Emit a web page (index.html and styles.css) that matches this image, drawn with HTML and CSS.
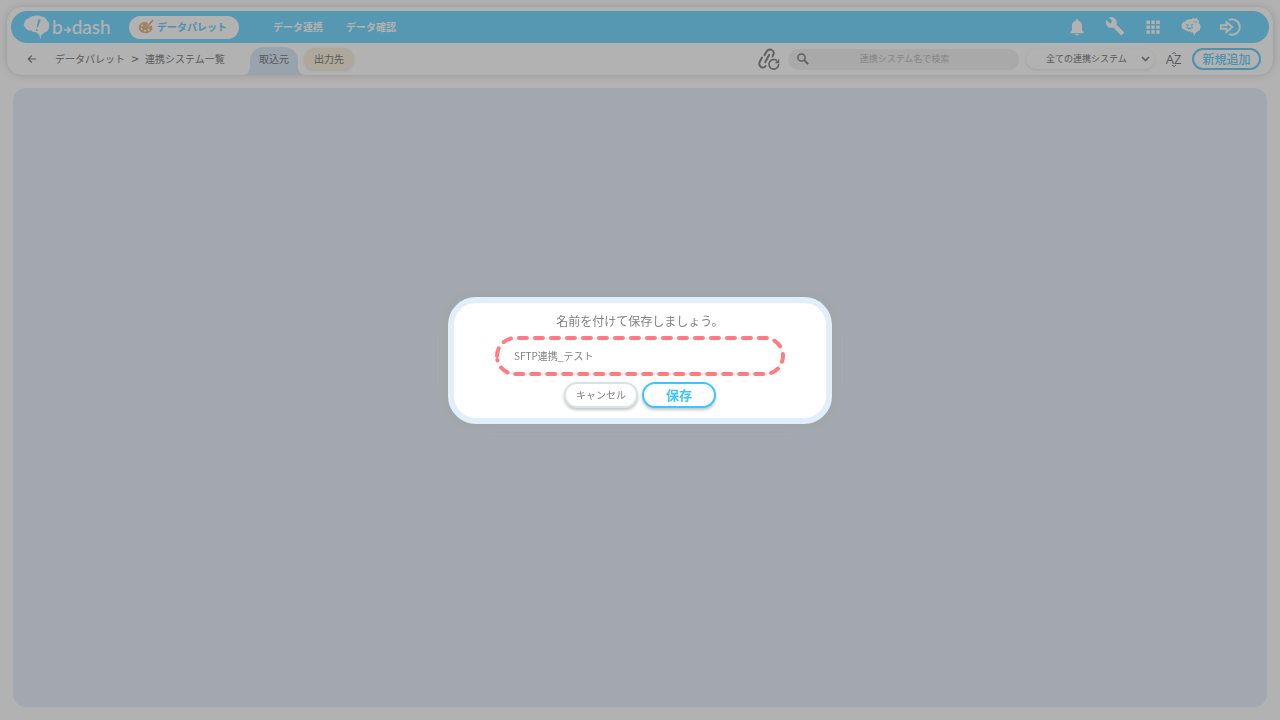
FILE: index.html
```html
<!DOCTYPE html>
<html lang="ja">
<head>
<meta charset="utf-8">
<meta name="viewport" content="width=device-width, initial-scale=1">
<title>b→dash</title>
<link rel="stylesheet" href="styles.css">
</head>
<body>
<div class="page">
  <header class="header">
    <nav class="navbar">
      <a class="logo" href="#" aria-label="b→dash">
        <svg class="logo-mark" width="28" height="24" viewBox="0 0 28 24" aria-hidden="true">
          <path fill="#fff" d="M9 1.500C12 0 16 0 18.500 1.500c3 .2 4.800 1.800 5.200 4C26 6.500 27 9 26 11.500c.2 3-1.500 5.200-4 5.500-1.200 1.800-3 2.200-3.600 3L17.500 24l-1.500-4.500c-1.300-.4-2.300-1.200-2.800-2.500-2 .3-3.800-.3-4.700-1.500-3 .2-5.200-1-6-2.800C.5 11.500.2 9 1.600 7.500 2 5 3.600 3.600 5.800 3.500 6.500 2.500 7.500 1.800 9 1.500z"/>
          <path fill="#7bdaff" d="M15.300 4.200l2.700.5-3.400 8-1.100-.2zM13.200 14l1.400.3-.5 1.700-1.400-.4z"/>
        </svg>
        <span class="logo-text">b</span>
        <svg class="logo-arrow" width="9" height="10" viewBox="0 0 9 10" aria-hidden="true"><path d="M1 5h6M4.500 2.200L7.300 5 4.500 7.800" fill="none" stroke="#fff" stroke-width="1.700"/></svg>
        <span class="logo-text">dash</span>
      </a>
      <a class="product" href="#">
        <svg width="16" height="16" viewBox="0 0 16 16" aria-hidden="true">
          <path fill="#eab88b" d="M7 3C3 3 .8 5.500.8 8.600c0 3.600 3 5.600 6.600 5.600 4 0 7-2.400 7-5.500 0-1.800-1.200-2.200-2.500-1.700-1.800.7-2.800-.2-2.200-1.500C10.500 4 9 3 7 3z"/>
          <circle cx="4" cy="6.500" r="1" fill="#fff"/><circle cx="3.700" cy="9.800" r="1" fill="#fff"/><circle cx="7" cy="11.800" r="1" fill="#fff"/><circle cx="10.700" cy="10.800" r="1" fill="#fff"/>
          <path d="M14.500 1.500L8 9.500" stroke="#fff" stroke-width="2.400"/>
          <path d="M14.500 1.500L9 8.300" stroke="#e3ab7c" stroke-width="1.400" stroke-linecap="round"/>
          <path fill="#e3ab7c" d="M8.500 7.500l1.200 1.200c-.5 1.400-1.700 1.700-3.200 1.300.8-.7.700-2 2-2.500z"/>
        </svg>
        <span>データパレット</span>
      </a>
      <a class="nav-link" href="#">データ連携</a>
      <a class="nav-link" href="#">データ確認</a>
      <div class="nav-icons">
        <button type="button" aria-label="通知"><svg width="20" height="20" viewBox="0 0 20 20"><path fill="#fff" d="M10 2c-.8 0-1.300.6-1.300 1.300v.5C6.300 4.400 5 6.300 5 8.800v4.400L3.400 15v1.200h13.200V15L15 13.200V8.800c0-2.500-1.300-4.400-3.700-5v-.5C11.300 2.600 10.800 2 10 2zM8.300 17h3.400c0 1-.7 1.600-1.700 1.600S8.300 18 8.300 17z"/></svg></button>
        <button type="button" aria-label="設定"><svg width="20" height="20" viewBox="0 1 24 24"><path fill="#fff" d="M22.700 19l-9.100-9.100c.9-2.300.4-5-1.500-6.900-2-2-5-2.400-7.400-1.300L9 6 6 9 1.600 4.700C.4 7.100.9 10.100 2.900 12.100c1.900 1.900 4.600 2.400 6.900 1.500l9.100 9.100c.4.4 1 .4 1.400 0l2.300-2.300c.5-.4.5-1.100.1-1.400z"/></svg></button>
        <button type="button" aria-label="メニュー"><svg width="20" height="20" viewBox="0 0 20 20"><path fill="#fff" d="M3.500 3.500h3.400v3.400H3.500zm4.900 0h3.400v3.400H8.400zm4.900 0h3.400v3.400h-3.400zM3.500 8.400h3.400v3.400H3.500zm4.900 0h3.400v3.400H8.400zm4.900 0h3.400v3.400h-3.400zM3.500 13.300h3.400v3.400H3.500zm4.900 0h3.400v3.400H8.400zm4.900 0h3.400v3.400h-3.400z"/></svg></button>
        <button type="button" aria-label="サポート"><svg width="20" height="20" viewBox="0 0 20 20">
          <path fill="#fff" d="M4 4.500C5.500 2.500 9 1.500 11 2.500l1-2 1.500 1.300L16 .8l.6 2.200 1.700.6-1 2c2.200 1.200 2.700 3.800 1.900 6-.4 2-1.800 3-3.600 3.400l-1.200 1.200L13.200 19l-1.200-3.500c-1.500 0-2.400-.4-3-1.300-1.700.5-3.300 0-4-1C2.500 13 .6 11.700.6 9.500.2 7 1.500 4.800 4 4.500z"/>
          <path d="M5 7.500l2.800.8M12 7.500l-2.400.8M6 9.500v2M11 9.500v2M7 12l1.500-1.200L10 12" stroke="#7bdaff" stroke-width="1.200" fill="none"/>
          <path d="M12.200 4.200c1 1.200 2.700 1.200 4 .5" stroke="#7bdaff" stroke-width=".7" fill="none"/></svg></button>
        <button type="button" aria-label="ログアウト"><svg width="22" height="20" viewBox="0 0 22 20"><g fill="none" stroke="#fff" stroke-width="1.900"><path d="M1.800 8.300h5.700V5l5.800 5-5.800 5v-3.300H1.800z"/><path d="M10 2.800c1-.4 2-.6 3-.6a7.800 7.800 0 0 1 0 15.600c-1 0-2-.2-3-.6"/></g></svg></button>
      </div>
    </nav>
    <div class="toolbar">
      <button class="back" type="button" aria-label="戻る"><svg width="10" height="10" viewBox="0 0 10 10"><path d="M9 5H1.500M4.800 1.500L1.300 5l3.500 3.500" fill="none" stroke="#888" stroke-width="1.200"/></svg></button>
      <div class="crumbs"><a href="#">データパレット</a><span class="sep">&gt;</span><span>連携システム一覧</span></div>
      <div class="tabs">
        <button class="tab tab-active" type="button">取込元</button>
        <button class="tab tab-output" type="button">出力先</button>
      </div>
      <div class="tools">
        <button class="relink" type="button" aria-label="連携を更新"><svg width="22" height="22" viewBox="0 0 22 22"><g fill="none" stroke="#888" stroke-width="1.900" stroke-linecap="round"><path d="M6.500 7.300L8.300 4C9.500 1.700 11.800 1 13.700 2c1.900 1 2.500 3.100 1.400 5.200l-.6 1.200"/><path d="M11.200 6.800L7.200 14.200"/><path d="M4 9.500L2 13.300c-1.300 2.500-.7 4.900 1.300 5.900 1.400.7 3.200.4 4.300-1.200"/></g><path d="M18.900 12.600a4.800 4.800 0 1 0 1.700 3.200" fill="none" stroke="#888" stroke-width="1.600"/><path d="M21.200 10.800v4.400h-4.400z" fill="#888"/></svg></button>
        <label class="search">
          <svg width="12" height="12" viewBox="0 0 12 12" aria-hidden="true"><circle cx="4.500" cy="4.500" r="3.600" fill="none" stroke="#888" stroke-width="1.500"/><path d="M7.200 7.200l4 4" stroke="#888" stroke-width="1.800"/></svg>
          <input type="text" placeholder="連携システム名で検索" aria-label="連携システム名で検索">
        </label>
        <div class="filter">
          <select aria-label="連携システム"><option>全ての連携システム</option></select>
          <svg class="chevron" width="9" height="6" viewBox="0 0 9 6" aria-hidden="true"><path d="M1 1l3.500 3.500L8 1" fill="none" stroke="#888" stroke-width="1.700"/></svg>
        </div>
        <button class="sort" type="button">
          <svg width="8" height="2" viewBox="0 0 8 2" aria-hidden="true"><path d="M2 2L4 .5 6 2" fill="none" stroke="#888"/></svg>
          <span>AZ</span>
          <svg width="8" height="2" viewBox="0 0 8 2" aria-hidden="true"><path d="M2 0l2 1.500L6 0" fill="none" stroke="#888"/></svg>
        </button>
        <button class="add" type="button">新規追加</button>
      </div>
    </div>
  </header>
  <main class="content"></main>
</div>

<div class="backdrop">
  <form class="dialog" role="dialog" aria-labelledby="dialog-title">
    <label class="dialog-title" id="dialog-title" for="name">名前を付けて保存しましょう。</label>
    <div class="field">
      <input id="name" type="text" value="SFTP連携_テスト">
      <svg class="highlight" width="290" height="40" viewBox="0 0 290 40" aria-hidden="true"><path d="M2 20A18 18 0 0 1 20 2H270A18 18 0 0 1 270 38H20A18 18 0 0 1 2.400 24" fill="none" stroke="#ff7c80" stroke-width="4" stroke-linecap="round" stroke-dasharray="8 8"/></svg>
    </div>
    <div class="actions">
      <button class="action cancel" type="button">キャンセル</button>
      <button class="action save" type="submit">保存</button>
    </div>
  </form>
</div>
</body>
</html>
```

FILE: styles.css
```css
* { box-sizing: border-box; }

body {
  margin: 0;
  background: #fff;
  color: #808080;
  font: 10px/16px "Noto Sans CJK JP", sans-serif;
}

button, input, select {
  margin: 0;
  padding: 0;
  border: 0;
  background: none;
  color: inherit;
  font: inherit;
  outline: 0;
}

a { color: inherit; text-decoration: none; }
svg { display: block; flex: none; }

.page {
  display: flex;
  flex-direction: column;
  gap: 13px;
  min-height: 100vh;
  padding: 7px 7px 13px;
}

.header {
  padding: 4px 4px 0;
  border-radius: 15px;
  background: #fff;
  box-shadow: 0 0 8px rgba(0, 0, 0, .16);
}

.navbar {
  display: flex;
  align-items: center;
  height: 32px;
  padding: 0 28px 0 12px;
  border-radius: 16px;
  background: #7bdaff;
  color: #fff;
}

.logo { display: flex; align-items: center; width: 106px; }
.logo-mark { margin-right: 1px; }
.logo-text { font: 500 19px/24px Lato, sans-serif; }
.logo-arrow { margin-top: 5px; }

.product {
  display: flex;
  align-items: center;
  gap: 3px;
  height: 23px;
  margin-right: 34px;
  padding: 0 12px 0 9px;
  border-radius: 12px;
  background: #fff;
  color: #6dd2fa;
  font-weight: 700;
}

.nav-link { margin-right: 23px; font-weight: 700; }

.nav-icons { display: flex; gap: 18px; margin-left: auto; }

.toolbar {
  display: flex;
  align-items: center;
  height: 32px;
  padding: 0 8px 0 16px;
}

.back { width: 28px; }
.crumbs { display: flex; width: 195px; white-space: nowrap; }
.sep { width: 20px; font-size: 13px; text-align: center; }

.tabs { display: flex; align-self: stretch; align-items: center; gap: 6px; }

.tab { height: 22px; padding: 0 10px; border-radius: 11px; }

.tab-active {
  position: relative;
  align-self: flex-end;
  height: 28px;
  padding: 0 9px 4px;
  border-radius: 14px 14px 0 0;
  background: #dbeaf7;
}

.tab-active::before, .tab-active::after {
  content: "";
  position: absolute;
  bottom: 0;
  width: 6px;
  height: 6px;
}
.tab-active::before { right: 100%; background: radial-gradient(circle at 0 0, transparent 5px, #dbeaf7 6px); }
.tab-active::after { left: 100%; background: radial-gradient(circle at 100% 0, transparent 5px, #dbeaf7 6px); }

.tab-output { background: #f8f1dc; box-shadow: 0 1px 3px rgba(0, 0, 0, .1); }

.tools { display: flex; align-items: center; gap: 7px; margin-left: auto; }

.relink { margin-right: 1px; }

.search {
  display: flex;
  align-items: center;
  width: 231px;
  height: 21px;
  padding: 0 9px;
  border-radius: 11px;
  background: #f2f2f2;
}
.search input { flex: 1; min-width: 0; padding-right: 10px; font-size: 9px; text-align: center; }
.search input::placeholder { color: #c0c0c0; opacity: 1; }

.filter { position: relative; width: 129px; height: 20px; }
.filter select {
  width: 100%;
  height: 100%;
  padding: 0 28px 0 20px;
  border-radius: 10px;
  background: #fff;
  box-shadow: 0 1px 3px rgba(0, 0, 0, .1);
  font-size: 9px;
  text-align: left;
  appearance: none;
}
.chevron { position: absolute; top: 7px; right: 5px; pointer-events: none; }

.sort {
  display: flex;
  flex-direction: column;
  align-items: center;
  width: 23px;
  font: 13px/11px "Open Sans", sans-serif;
}

.add {
  width: 69px;
  height: 22px;
  border: 2px solid #6dd2fa;
  border-radius: 11px;
  color: #6dd2fa;
  font-size: 12px;
  font-weight: 500;
  line-height: 18px;
}

.content {
  flex: 1;
  margin: 0 6px;
  border-radius: 13px;
  background: #eaf0fb;
}

.backdrop {
  position: fixed;
  inset: 0;
  display: flex;
  align-items: center;
  justify-content: center;
  background: rgba(0, 0, 0, .3);
}

.dialog {
  display: flex;
  flex-direction: column;
  align-items: center;
  gap: 6px;
  width: 384px;
  padding: 9px 0 10px;
  border: 6px solid #e2effa;
  border-radius: 28px;
  background: #fff;
  box-shadow: 0 0 14px rgba(150, 160, 150, .6);
}

.dialog-title { font-size: 12px; line-height: 18px; }

.field { position: relative; width: 290px; padding: 3px; }
.field input {
  display: block;
  width: 100%;
  height: 34px;
  padding: 0 16px;
  border-radius: 17px;
  box-shadow: 0 1px 2px rgba(120, 140, 150, .3);
}
.highlight { position: absolute; top: 0; left: 0; pointer-events: none; }

.actions { display: flex; gap: 4px; }
.action {
  width: 74px;
  height: 26px;
  border: 2px solid #dae3e8;
  border-radius: 13px;
  background: #fff;
  box-shadow: 0 2px 3px rgba(0, 0, 0, .24);
}
.save { border-color: #3fc5fb; color: #3fc5fb; font-size: 13px; font-weight: 700; }
```
